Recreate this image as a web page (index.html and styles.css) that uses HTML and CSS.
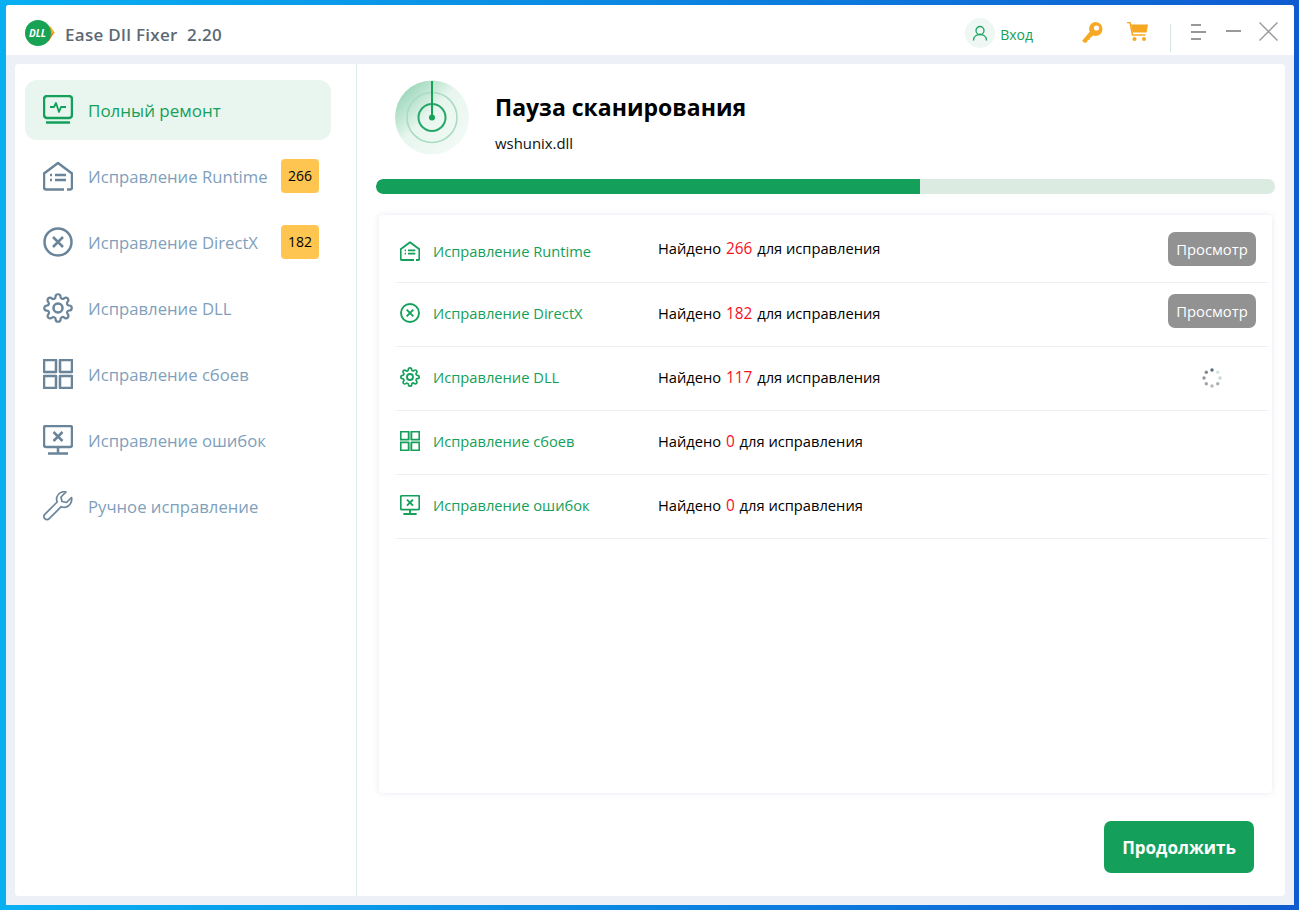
FILE: index.html
```html
<!DOCTYPE html>
<html lang="ru">
<head>
    <meta charset="UTF-8">
    <title>Ease Dll Fixer</title>
    <link rel="stylesheet" href="styles.css">
</head>
<body>
    <svg class="icon-defs" width="0" height="0">
        <symbol id="i-monitor" viewBox="0 0 30 30">
            <rect class="ln" x="1" y="1" width="28" height="22" rx="3"/>
            <path d="M7 12h4l2-4 3 9 2-5h5" fill="none" stroke="currentColor" stroke-width="1.8" stroke-linejoin="round"/>
            <path class="ln" d="M3 27.5h24"/>
        </symbol>
        <symbol id="i-runtime" viewBox="0 0 30 30">
            <path class="ln" d="M24 28.500h3a2 2 0 0 0 2-2V12.500L15 2 1 12.500v14a2 2 0 0 0 2 2h18"/>
            <path class="ln" d="M7 14h2M12 14h11M7 19h2M12 19h11"/>
        </symbol>
        <symbol id="i-directx" viewBox="0 0 30 30">
            <circle class="ln" cx="15" cy="15" r="13.500"/>
            <path class="ln" d="M10 10l10 10M20 10L10 20"/>
        </symbol>
        <symbol id="i-gear" viewBox="0 0 30 30">
            <g transform="scale(1.25)">
                <path class="ln gear-ln" d="M19.400 15a1.650 1.650 0 0 0 .330 1.820l.060.060a2 2 0 0 1 0 2.830 2 2 0 0 1-2.830 0l-.060-.060a1.650 1.650 0 0 0-1.820-.330 1.650 1.650 0 0 0-1 1.510V21a2 2 0 0 1-2 2 2 2 0 0 1-2-2v-.090A1.650 1.650 0 0 0 9 19.400a1.650 1.650 0 0 0-1.820.330l-.060.060a2 2 0 0 1-2.830 0 2 2 0 0 1 0-2.830l.060-.060a1.650 1.650 0 0 0 .330-1.820 1.650 1.650 0 0 0-1.510-1H3a2 2 0 0 1-2-2 2 2 0 0 1 2-2h.090A1.650 1.650 0 0 0 4.600 9a1.650 1.650 0 0 0-.330-1.820l-.060-.060a2 2 0 0 1 0-2.830 2 2 0 0 1 2.830 0l.060.060a1.650 1.650 0 0 0 1.820.330H9a1.650 1.650 0 0 0 1-1.510V3a2 2 0 0 1 2-2 2 2 0 0 1 2 2v.090a1.650 1.650 0 0 0 1 1.510 1.650 1.650 0 0 0 1.820-.330l.060-.060a2 2 0 0 1 2.830 0 2 2 0 0 1 0 2.830l-.060.060a1.650 1.650 0 0 0-.330 1.820V9a1.650 1.650 0 0 0 1.510 1H21a2 2 0 0 1 2 2 2 2 0 0 1-2 2h-.090a1.650 1.650 0 0 0-1.510 1z"/>
            </g>
            <circle class="ln" cx="15" cy="15" r="4.500"/>
        </symbol>
        <symbol id="i-grid" viewBox="0 0 30 30">
            <path class="ln" d="M1 1h12v12H1zM17 1h12v12H17zM1 17h12v12H1zM17 17h12v12H17z"/>
        </symbol>
        <symbol id="i-screen" viewBox="0 0 30 30">
            <rect class="ln" x="1" y="1" width="28" height="21" rx="2"/>
            <path class="ln" d="M10.500 7l9 9M19.500 7l-9 9"/>
            <path class="ln" d="M15 22v6M5 28.500h20"/>
        </symbol>
        <symbol id="i-wrench" viewBox="0 0 30 30">
            <path d="M28.500 6.500l-5 5-4.500-1-1-4.500 5-5c-4-1-8.500 1.500-9.300 5.500-.3 1.700 0 3.300.5 4.500L1.800 23.300c-1.300 1.300-1.300 3.200 0 4.400 1.300 1.300 3.200 1.300 4.400 0l12-12c1.300.6 2.800.8 4.500.5 4-.8 6.800-5.500 5.800-9.700z" fill="none" stroke="currentColor" stroke-width="1.700" stroke-linejoin="round"/>
        </symbol>
    </svg>

    <div class="window">
        <header class="titlebar">
            <svg class="logo" viewBox="0 0 30 26" width="30" height="26">
                <path d="M17 24l7-3 5-8-3-4-4 8z" fill="#f5792a"/>
                <path d="M25 6l5 7h-3l-3 4-3-2 3-3h-2z" fill="#f7a823"/>
                <circle cx="13" cy="13" r="13" fill="#17a254"/>
                <text class="logo-text" x="12.500" y="16.500" text-anchor="middle">DLL</text>
            </svg>
            <span class="app-name">Ease Dll Fixer&nbsp; 2.20</span>

            <div class="title-tools">
                <div class="login">
                    <span class="avatar">
                        <svg viewBox="0 0 16 16" width="16" height="16" fill="none" stroke="#1ca35f" stroke-width="1.300">
                            <circle cx="8" cy="5.500" r="4"/>
                            <path d="M1.500 15.500c0-4 3-6 6.500-6s6.500 2 6.500 6"/>
                        </svg>
                    </span>
                    <span class="login-text">Вход</span>
                </div>
                <svg class="key" viewBox="0 0 21 21" width="21" height="21">
                    <path d="M13.500 0a7 7 0 0 1 0 14 7 7 0 0 1-2.500-.5L9 15.500l-1 .2-.3 2-2 .3-.5 2-2.500 1-2.500-2.200 7.500-9A7 7 0 0 1 13.500 0z" fill="#f7a823"/>
                    <circle cx="14.500" cy="6" r="2.600" fill="#fff"/>
                </svg>
                <svg class="cart" viewBox="0 0 21 20" width="21" height="20">
                    <path d="M0 .5h3l2.500 12.500h13" fill="none" stroke="#f7a823" stroke-width="1.500"/>
                    <path d="M4 2.500h17l-1.500 8H5.500z" fill="#f7a823"/>
                    <circle cx="7.500" cy="17" r="2" fill="#f7a823"/>
                    <circle cx="17" cy="17" r="2" fill="#f7a823"/>
                </svg>
                <span class="tool-sep"></span>
                <svg class="win-btn menu-btn" viewBox="0 0 16 16" width="16" height="16">
                    <path d="M0 1h10M0 8h15M0 15h10" stroke="#999" stroke-width="1.800"/>
                </svg>
                <svg class="win-btn min-btn" viewBox="0 0 16 4" width="16" height="4">
                    <path d="M0 2h15" stroke="#999" stroke-width="2"/>
                </svg>
                <svg class="win-btn close-btn" viewBox="0 0 19 19" width="19" height="19">
                    <path d="M.5.500l18 18M18.500.500l-18 18" stroke="#999" stroke-width="1.400"/>
                </svg>
            </div>
        </header>

        <div class="body-wrap">
            <div class="card">
                <nav class="sidebar">
                    <a class="nav-item active"><svg class="nav-icon"><use href="#i-monitor"/></svg><span>Полный ремонт</span></a>
                    <a class="nav-item"><svg class="nav-icon"><use href="#i-runtime"/></svg><span>Исправление Runtime</span><b class="badge">266</b></a>
                    <a class="nav-item"><svg class="nav-icon"><use href="#i-directx"/></svg><span>Исправление DirectX</span><b class="badge">182</b></a>
                    <a class="nav-item"><svg class="nav-icon"><use href="#i-gear"/></svg><span>Исправление DLL</span></a>
                    <a class="nav-item"><svg class="nav-icon"><use href="#i-grid"/></svg><span>Исправление сбоев</span></a>
                    <a class="nav-item"><svg class="nav-icon"><use href="#i-screen"/></svg><span>Исправление ошибок</span></a>
                    <a class="nav-item"><svg class="nav-icon"><use href="#i-wrench"/></svg><span>Ручное исправление</span></a>
                </nav>

                <main class="content">
                    <div class="scan-head">
                        <svg class="radar" viewBox="0 0 74 76" width="74" height="76">
                            <defs>
                                <linearGradient id="radar-fill" x1="0.100" y1="0.100" x2="0.900" y2="0.900">
                                    <stop offset="0" stop-color="#96d5b5"/>
                                    <stop offset="0.450" stop-color="#e8f6ef"/>
                                    <stop offset="1" stop-color="#f3faf7"/>
                                </linearGradient>
                            </defs>
                            <circle cx="37" cy="37.500" r="37" fill="url(#radar-fill)"/>
                            <circle cx="37" cy="37.500" r="25" fill="none" stroke="#a9dcc2" stroke-width="1.600"/>
                            <circle cx="37" cy="37.500" r="13.500" fill="none" stroke="#27a868" stroke-width="2"/>
                            <path d="M37 1v37" stroke="#17a25a" stroke-width="2"/>
                            <circle cx="37" cy="37.500" r="3" fill="#17a25a"/>
                        </svg>
                        <div class="scan-text">
                            <h1>Пауза сканирования</h1>
                            <p>wshunix.dll</p>
                        </div>
                    </div>

                    <div class="progress"><div class="progress-fill" style="width: 60.500%"></div></div>

                    <div class="result-list">
                        <div class="result-row first">
                            <svg class="row-icon"><use href="#i-runtime"/></svg>
                            <span class="row-name">Исправление Runtime</span>
                            <span class="row-found up">Найдено <em>266</em> для исправления</span>
                            <button class="view-btn">Просмотр</button>
                        </div>
                        <div class="result-row">
                            <svg class="row-icon"><use href="#i-directx"/></svg>
                            <span class="row-name">Исправление DirectX</span>
                            <span class="row-found">Найдено <em>182</em> для исправления</span>
                            <button class="view-btn">Просмотр</button>
                        </div>
                        <div class="result-row">
                            <svg class="row-icon"><use href="#i-gear"/></svg>
                            <span class="row-name">Исправление DLL</span>
                            <span class="row-found">Найдено <em>117</em> для исправления</span>
                            <svg class="spinner" viewBox="0 0 20 20" width="20" height="20">
                                <circle cx="10" cy="2" r="1.700" fill="#5c6b78"/>
                                <circle cx="15.700" cy="4.300" r="1.700" fill="#d5e4de"/>
                                <circle cx="18" cy="10" r="1.700" fill="#c9d6d2"/>
                                <circle cx="15.700" cy="15.700" r="1.700" fill="#a9b2b6"/>
                                <circle cx="10" cy="18" r="1.700" fill="#b9b6bf"/>
                                <circle cx="4.300" cy="15.700" r="1.700" fill="#9da3a9"/>
                                <circle cx="2" cy="10" r="1.700" fill="#8f969d"/>
                                <circle cx="4.300" cy="4.300" r="1.700" fill="#7f878f"/>
                            </svg>
                        </div>
                        <div class="result-row">
                            <svg class="row-icon"><use href="#i-grid"/></svg>
                            <span class="row-name">Исправление сбоев</span>
                            <span class="row-found">Найдено <em>0</em> для исправления</span>
                        </div>
                        <div class="result-row">
                            <svg class="row-icon"><use href="#i-screen"/></svg>
                            <span class="row-name">Исправление ошибок</span>
                            <span class="row-found">Найдено <em>0</em> для исправления</span>
                        </div>
                    </div>

                    <div class="actions">
                        <button class="continue-btn">Продолжить</button>
                    </div>
                </main>
            </div>
        </div>
    </div>
</body>
</html>
```

FILE: styles.css
```css
* {
    box-sizing: border-box;
}
html, body {
    height: 100%;
}
body {
    margin: 0;
    padding: 5px 5px 5px 6px;
    overflow: hidden;
    background: linear-gradient(90deg, #08b0f2, #0f5bd0);
    font-family: "Open Sans", "Noto Sans", Arial, sans-serif;
}
.icon-defs {
    position: absolute;
}
.ln {
    fill: none;
    stroke: currentColor;
    stroke-width: var(--sw, 2);
    stroke-linejoin: round;
}
.gear-ln {
    stroke-width: calc(var(--sw, 2) / 1.400);
}
.window {
    height: 100%;
    display: flex;
    flex-direction: column;
    background: #edf1f7;
    border-radius: 3px 3px 0 0;
}

/* title bar */
.titlebar {
    height: 50px;
    flex-shrink: 0;
    display: flex;
    align-items: center;
    padding-left: 19px;
    padding-top: 8px;
    background: #fff;
    border-radius: 3px 3px 0 0;
}
.logo {
    margin-top: -3px;
}
.logo-text {
    font-size: 10px;
    font-weight: 700;
    font-style: italic;
    fill: #fff;
}
.app-name {
    margin-left: 10px;
    font-size: 17px;
    font-weight: 600;
    letter-spacing: 0.3px;
    color: #5d6975;
}
.title-tools {
    margin-left: auto;
    display: flex;
    align-items: center;
    padding-right: 16px;
}
.login {
    display: flex;
    align-items: center;
    gap: 5px;
}
.avatar {
    width: 30px;
    height: 30px;
    margin-top: -2px;
    border-radius: 50%;
    background: #eef7f3;
    display: flex;
    align-items: center;
    justify-content: center;
}
.login-text {
    font-size: 14px;
    color: #14a05a;
}
.key {
    margin-left: 49px;
    margin-top: -4px;
}
.cart {
    margin-left: 24px;
    margin-top: -4px;
}
.tool-sep {
    width: 1px;
    height: 28px;
    margin-left: 22px;
    margin-top: 8px;
    background: #d3e6df;
}
.menu-btn {
    margin-left: 20px;
    margin-top: -4px;
}
.min-btn {
    margin-left: 19px;
    margin-top: -6px;
}
.close-btn {
    margin-left: 17px;
    margin-top: -6px;
}

/* main card */
.body-wrap {
    flex: 1;
    min-height: 0;
    padding: 9px 9px 9px 9px;
}
.card {
    height: 100%;
    display: flex;
    background: #fff;
    border-radius: 4px;
}
.sidebar {
    width: 342px;
    flex-shrink: 0;
    padding: 16px 25px 0 10px;
    border-right: 1px solid #dcefe7;
    display: flex;
    flex-direction: column;
    gap: 6px;
}
.nav-item {
    height: 60px;
    display: flex;
    align-items: center;
    padding: 0 12px 0 18px;
    border-radius: 12px;
    font-size: 16.700px;
    color: #7f9fbc;
}
.nav-item.active {
    background: #e8f6ef;
    color: #14a05a;
    font-size: 17px;
}
.nav-icon {
    --sw: 2.500;
    width: 30px;
    height: 30px;
    margin-right: 15px;
    flex-shrink: 0;
    color: #6a8499;
}
.nav-item.active .nav-icon {
    color: #14a05a;
}
.badge {
    margin-left: auto;
    width: 38px;
    height: 34px;
    line-height: 34px;
    text-align: center;
    border-radius: 4px;
    background: #ffc551;
    color: #000;
    font-size: 14px;
    font-weight: 400;
}

/* content */
.content {
    flex: 1;
    min-width: 0;
    display: flex;
    flex-direction: column;
    padding: 16px 10px 0 19px;
}
.scan-head {
    display: flex;
    align-items: center;
    padding-left: 19px;
}
.radar {
    flex-shrink: 0;
}
.scan-text {
    margin-left: 26px;
    margin-top: 8px;
}
.scan-text h1 {
    margin: 0;
    font-size: 23px;
    line-height: 30px;
    font-weight: 700;
    color: #000;
}
.scan-text p {
    margin: 11px 0 0;
    font-size: 14.900px;
    line-height: 20px;
    color: #111;
}
.progress {
    height: 15px;
    margin-top: 23px;
    border-radius: 7px;
    background: #dcebe2;
    overflow: hidden;
}
.progress-fill {
    height: 100%;
    background: #14a05a;
    border-radius: 7px 0 0 7px;
}
.result-list {
    height: 578px;
    margin: 21px 3px 0;
    padding: 0 4px 0 17px;
    border-radius: 4px;
    background: #fff;
    box-shadow: 0 0 6px rgba(130, 150, 190, 0.22);
}
.result-row {
    height: 64px;
    display: flex;
    align-items: center;
    padding-bottom: 2px;
    border-bottom: 1px solid #edf0f2;
    font-size: 14.700px;
}
.result-row.first {
    height: 68px;
    padding-bottom: 0;
    padding-top: 6px;
}
.row-icon {
    --sw: 2.800;
    width: 20px;
    height: 20px;
    margin: -2px 13px 0 4px;
    flex-shrink: 0;
    color: #14a05a;
}
.row-name {
    width: 225px;
    margin-top: -2px;
    flex-shrink: 0;
    color: #14a05a;
}
.row-found {
    color: #000;
}
.row-found.up {
    margin-top: -6px;
}
.row-found em {
    margin: 0 1px;
    font-size: 15.400px;
    font-style: normal;
    color: #f5121f;
}
.view-btn {
    margin-left: auto;
    margin-right: 12px;
    margin-top: -5px;
    width: 88px;
    height: 34px;
    border: none;
    border-radius: 7px;
    background: #929292;
    color: #fff;
    font: inherit;
    font-size: 14.800px;
}
.spinner {
    margin-left: auto;
    margin-right: 46px;
}
.actions {
    display: flex;
    justify-content: flex-end;
    padding: 28px 21px 0 0;
}
.continue-btn {
    width: 150px;
    height: 52px;
    border: none;
    border-radius: 7px;
    background: #14a05a;
    color: #fff;
    font: inherit;
    font-size: 17px;
    font-weight: 700;
}
```
